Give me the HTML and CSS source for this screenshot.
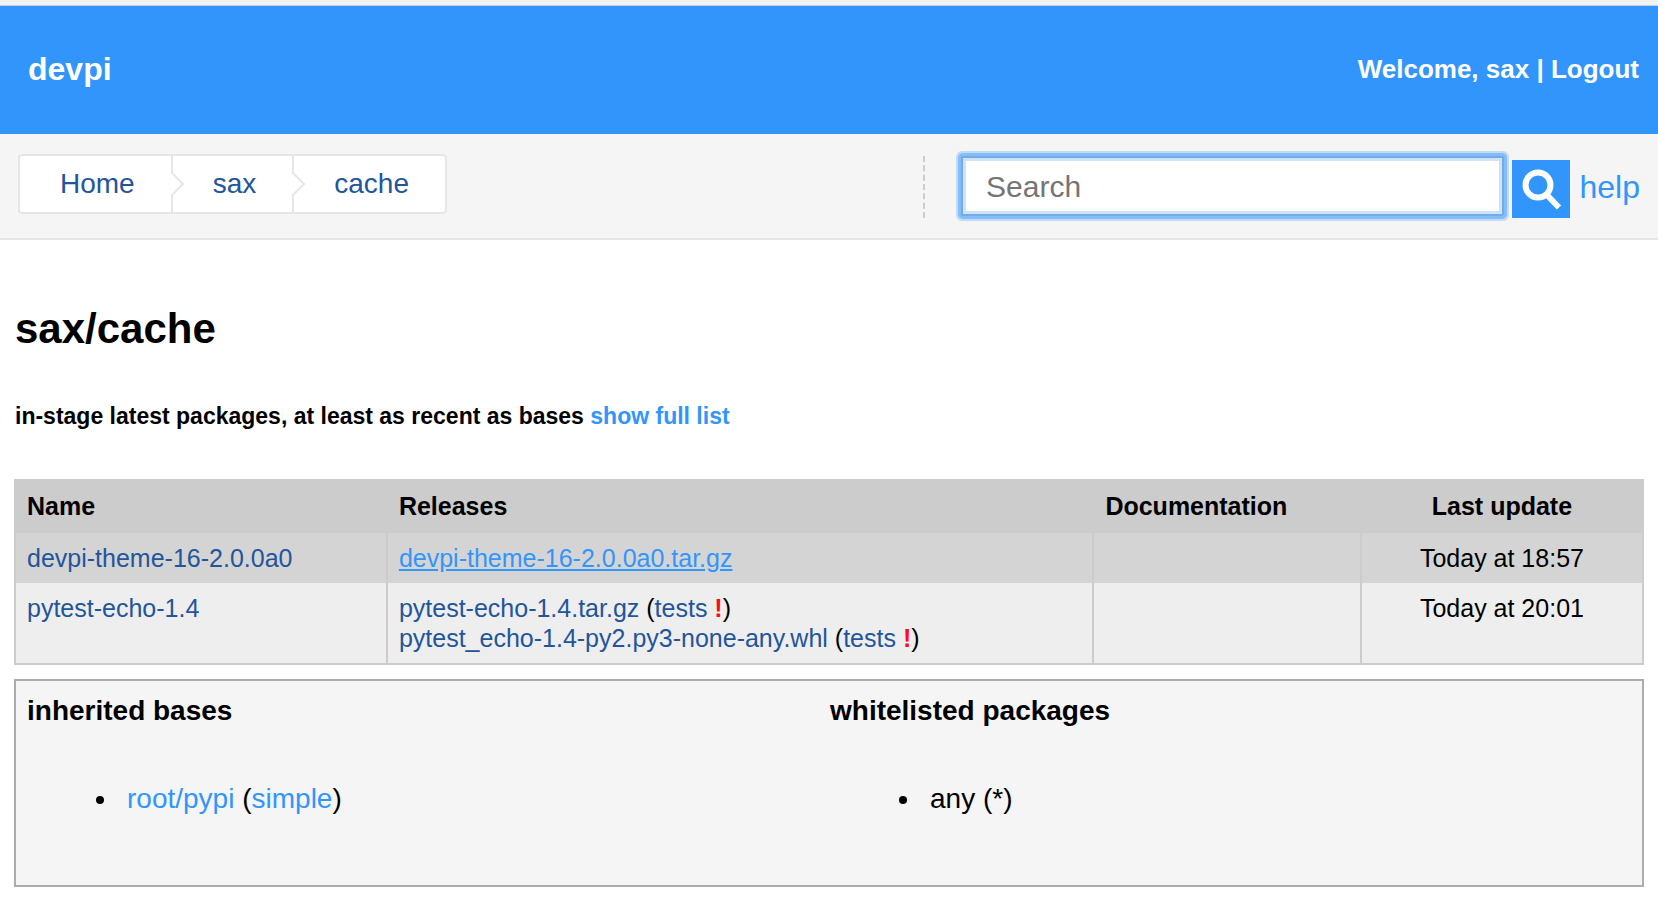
FILE: index.html
```html
<!DOCTYPE html>
<html lang="en">
<head>
<meta charset="utf-8">
<title>sax/cache - devpi</title>
<link rel="stylesheet" href="styles.css">
</head>
<body>
<header class="header">
  <a class="brand" href="#">devpi</a>
  <div class="account">Welcome, sax | <a href="#">Logout</a></div>
</header>
<nav class="navbar">
  <ol class="crumbs">
    <li class="crumb"><a href="#">Home</a><svg class="crumb-arrow" viewBox="0 0 14 24" aria-hidden="true"><path d="M1 1 L12 12 L1 23" fill="#fff" stroke="#e6e6e6" stroke-width="2"/><path d="M0 2V22" stroke="#fff" stroke-width="3"/></svg></li>
    <li class="crumb"><a href="#">sax</a><svg class="crumb-arrow" viewBox="0 0 14 24" aria-hidden="true"><path d="M1 1 L12 12 L1 23" fill="#fff" stroke="#e6e6e6" stroke-width="2"/><path d="M0 2V22" stroke="#fff" stroke-width="3"/></svg></li>
    <li class="crumb"><a href="#">cache</a></li>
  </ol>
  <form class="search">
    <input class="search-input" type="text" placeholder="Search" aria-label="Search">
    <button class="search-button" type="button" aria-label="Search">
      <svg viewBox="0 0 58 58" aria-hidden="true"><path d="M34 34 L47 47.5" stroke="#fff" stroke-width="6"/><circle cx="26" cy="25" r="12.5" fill="none" stroke="#fff" stroke-width="6"/></svg>
    </button>
    <a class="help" href="#">help</a>
  </form>
</nav>
<main class="main">
  <h1 class="title">sax/cache</h1>
  <h2 class="subtitle">in-stage latest packages, at least as recent as bases <a href="#">show full list</a></h2>
  <table class="packages">
    <colgroup><col class="col-name"><col class="col-releases"><col class="col-docs"><col class="col-updated"></colgroup>
    <thead>
      <tr><th>Name</th><th>Releases</th><th>Documentation</th><th class="updated">Last update</th></tr>
    </thead>
    <tbody>
      <tr class="row-active">
        <td><a href="#">devpi-theme-16-2.0.0a0</a></td>
        <td><a class="link-active" href="#">devpi-theme-16-2.0.0a0.tar.gz</a></td>
        <td></td>
        <td class="updated">Today at 18:57</td>
      </tr>
      <tr>
        <td><a href="#">pytest-echo-1.4</a></td>
        <td><a href="#">pytest-echo-1.4.tar.gz</a> (<a href="#">tests <span class="failed">!</span></a>)<br><a href="#">pytest_echo-1.4-py2.py3-none-any.whl</a> (<a href="#">tests <span class="failed">!</span></a>)</td>
        <td></td>
        <td class="updated">Today at 20:01</td>
      </tr>
    </tbody>
  </table>
  <div class="info">
    <section>
      <h3 class="info-title">inherited bases</h3>
      <ul class="info-list"><li><a href="#">root/pypi</a> (<a href="#">simple</a>)</li></ul>
    </section>
    <section>
      <h3 class="info-title">whitelisted packages</h3>
      <ul class="info-list"><li>any (*)</li></ul>
    </section>
  </div>
</main>
</body>
</html>
```
FILE: styles.css
```css
* { box-sizing: border-box; }
body {
  margin: 0;
  border-top: 5px solid #f2f2f2;
  background: #fff;
  color: #000;
  font-family: "Liberation Sans", Arial, sans-serif;
  font-size: 28px;
}
a { color: #3295fc; text-decoration: none; }

.header {
  display: flex;
  align-items: center;
  justify-content: space-between;
  min-height: 129px;
  padding: 0 19px 2px 28px;
  border-top: 1px solid #c4d0dc;
  background: #3295fc;
  color: #fff;
  font-size: 26px;
  font-weight: bold;
}
.header a { color: #fff; }
.header .brand { font-size: 32px; }

.navbar {
  display: flex;
  align-items: flex-start;
  justify-content: space-between;
  padding: 20px 18px;
  border-bottom: 2px solid #e6e6e6;
  background: #f5f5f5;
}
.crumbs {
  display: flex;
  margin: 0;
  padding: 0;
  border: 2px solid #e6e6e6;
  border-radius: 4px;
  background: #fff;
  list-style: none;
}
.crumb {
  position: relative;
  padding: 0 36px 0 40px;
  line-height: 56px;
}
.crumb + .crumb { border-left: 2px solid #e6e6e6; }
.crumb a { color: #22559b; }
.crumb-arrow {
  position: absolute;
  z-index: 1;
  top: 16px;
  right: -14px;
  width: 14px;
  height: 24px;
}

.search {
  display: flex;
  flex: 0 0 44.2%;
  align-items: flex-start;
  margin-top: 2px;
  padding-left: 36px;
  border-left: 2px dashed #ccc;
}
.search-input {
  flex: 1;
  min-width: 0;
  height: 60px;
  margin-right: 8px;
  padding: 2px 23px 0;
  border: 2px solid #72abe9;
  border-radius: 2px;
  outline: none;
  background: #fff;
  box-shadow: inset 0 0 0 3px #d0e2f6, 0 0 0 3px #85bdf8, 0 0 0 5px #c2dcf7;
  font: 30px "Liberation Sans", Arial, sans-serif;
}
.search-input::placeholder { color: #757575; opacity: 1; }
.search-button {
  width: 58px;
  height: 58px;
  margin: 4px 10px 0 0;
  padding: 0;
  border: 0;
  background: #3295fc;
}
.search-button svg { display: block; width: 58px; height: 58px; }
.help { font-size: 32px; line-height: 62px; }

.main { padding: 64px 14px 12px; }
.title,
.subtitle { padding-left: 1px; }
.title { margin: 0 0 46px; font-size: 42px; line-height: 50px; }
.subtitle { margin: 0 0 47px; font-size: 23px; line-height: 32px; }

.packages {
  width: 100%;
  margin-bottom: 14px;
  border: 2px solid #ccc;
  border-spacing: 0;
  background: #eee;
  font-size: 25px;
  line-height: 30px;
  table-layout: fixed;
}
.col-name { width: 22.75%; }
.col-releases { width: 43.45%; }
.col-docs { width: 16.45%; }
.col-updated { width: 17.35%; }
.packages th,
.packages td { padding: 10px 11px; text-align: left; vertical-align: top; }
.packages th { padding-bottom: 12px; background: #ccc; }
.packages th + th,
.packages td + td { border-left: 2px solid #ccc; }
.packages .updated { text-align: center; }
.packages a { color: #22559b; }
.packages .link-active { color: #3295fc; text-decoration: underline; }
.row-active { background: #d4d4d4; }
.packages .failed { color: #fc0d1b; font-weight: bold; }

.info {
  display: grid;
  grid-template-columns: 1fr 1fr;
  column-gap: 2px;
  padding: 14px 11px;
  border: 2px solid #acacac;
  background: #f5f5f5;
  line-height: 32px;
}
.info-title { margin: 0; font-size: 28px; }
.info-list { margin: 56px 0; padding-left: 92px; }
.info-list li { padding-left: 8px; }
```
